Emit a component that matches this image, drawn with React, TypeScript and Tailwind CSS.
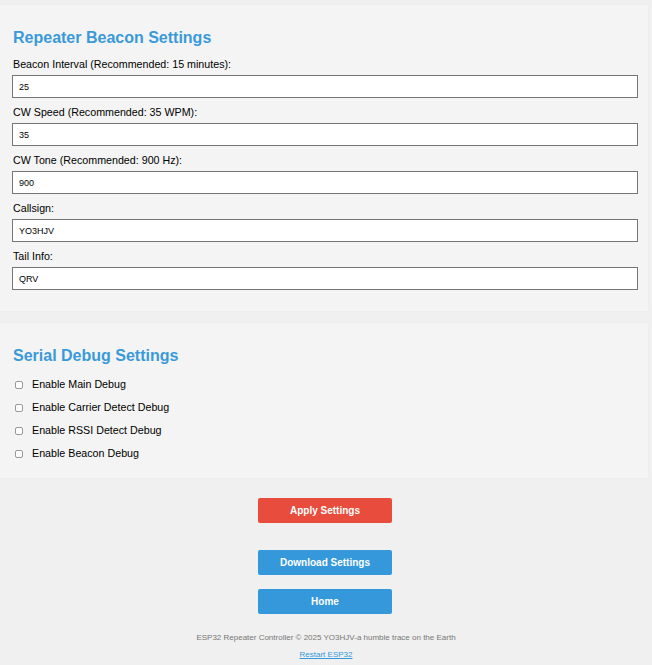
import React from "react";

const fields = [
  { label: "Beacon Interval (Recommended: 15 minutes):", value: "25" },
  { label: "CW Speed (Recommended: 35 WPM):", value: "35" },
  { label: "CW Tone (Recommended: 900 Hz):", value: "900" },
  { label: "Callsign:", value: "YO3HJV" },
  { label: "Tail Info:", value: "QRV" },
];

const checks = [
  "Enable Main Debug",
  "Enable Carrier Detect Debug",
  "Enable RSSI Detect Debug",
  "Enable Beacon Debug",
];

export default function App() {
  return (
    <div
      className="min-h-[665px] w-[652px] bg-[#f0f0f0] pt-[5px]"
      style={{ fontFamily: '"Liberation Sans", Arial, sans-serif' }}
    >
      <section className="w-[648px] bg-[#f4f4f4] px-[12px] pt-[23px] pb-[21px] shadow-[0_0_3px_rgba(0,0,0,0.04)]">
        <h2 className="text-[16px] font-bold leading-[19px] text-[#3a9ad9] mb-[11px] pl-[1px]">
          Repeater Beacon Settings
        </h2>
        <div className="flex flex-col gap-[8px]">
          {fields.map((f) => (
            <div key={f.label} className="flex flex-col">
              <label className="text-[10.7px] leading-[13px] text-black pl-[1px] mb-[4px]">
                {f.label}
              </label>
              <input
                readOnly
                value={f.value}
                className="h-[23px] w-[626px] border border-[#767676] bg-white px-[6px] text-[9px] text-black outline-none"
                style={{ fontFamily: '"Liberation Sans", Arial, sans-serif' }}
              />
            </div>
          ))}
        </div>
      </section>

      <section className="mt-[12px] w-[648px] bg-[#f4f4f4] px-[12px] pt-[23px] pb-[13px] shadow-[0_0_3px_rgba(0,0,0,0.04)]">
        <h2 className="text-[16px] font-bold leading-[19px] text-[#3a9ad9] mb-[8px] pl-[1px]">
          Serial Debug Settings
        </h2>
        <div className="flex flex-col">
          {checks.map((c) => (
            <label key={c} className="flex h-[23px] items-center text-[10.7px] text-black">
              <span className="ml-[3px] mr-[9px] inline-block h-[8px] w-[8px] rounded-[2px] border border-[#999] bg-white" />
              {c}
            </label>
          ))}
        </div>
      </section>

      <div className="flex flex-col items-center pt-[20px]">
        <button className="mr-[2px] h-[25px] w-[134px] rounded-[2px] bg-[#e74c3c] text-[10px] font-bold text-white">
          Apply Settings
        </button>
        <button className="mr-[2px] mt-[27px] h-[25px] w-[134px] rounded-[2px] bg-[#3498db] text-[10px] font-bold text-white">
          Download Settings
        </button>
        <button className="mr-[2px] mt-[14px] h-[25px] w-[134px] rounded-[2px] bg-[#3498db] text-[10px] font-bold text-white">
          Home
        </button>
        <p className="mt-[19px] text-[8px] leading-[10px] text-[#777]">
          ESP32 Repeater Controller © 2025 YO3HJV-a humble trace on the Earth
        </p>
        <a className="mt-[7px] text-[8px] leading-[10px] text-[#3498db] underline">Restart ESP32</a>
      </div>
    </div>
  );
}
